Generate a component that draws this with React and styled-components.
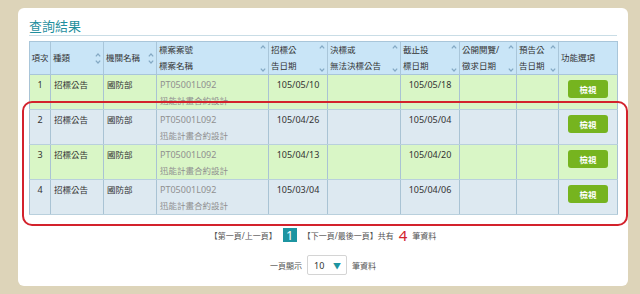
import React from "react";
import styled, { createGlobalStyle } from "styled-components";

const GlobalStyle = createGlobalStyle`
  html, body {
    margin: 0;
    padding: 0;
    background: #ddd4b9;
  }
  body {
    font-family: "Noto Sans", "Noto Sans CJK TC", sans-serif;
    color: #333;
  }
`;

const Page = styled.div`
  width: 640px;
  height: 294px;
  padding: 8px 12px 8px 18px;
  box-sizing: border-box;
`;

const Card = styled.div`
  position: relative;
  background: #fff;
  border-radius: 6px;
  height: 278px;
  box-sizing: border-box;
  padding: 8px 11px 12px;
  display: flex;
  flex-direction: column;
`;

const Title = styled.h2`
  margin: 0;
  font-size: 13px;
  line-height: 19px;
  font-weight: normal;
  color: #1f8f9e;
  border-bottom: 1px solid #c9dde6;
  font-family: "Noto Sans CJK TC", sans-serif;
`;

const Table = styled.table`
  margin-top: 5px;
  width: 588px;
  border-collapse: collapse;
  table-layout: fixed;
  font-size: 8.5px;
`;

const Th = styled.th`
  background: #c9e5f7;
  border: 1px solid #a9c6da;
  height: 33px;
  padding: 0 ${p => (p.$tight ? "0" : "2px")};
  text-align: left;
  font-weight: normal;
  color: #333;
  vertical-align: middle;
  line-height: 16px;
  white-space: nowrap;
  box-sizing: border-box;
`;

const HeadInner = styled.div`
  display: flex;
  justify-content: ${p => (p.$tight ? "center" : "space-between")};
  align-items: stretch;
`;

const Arrows = styled.div`
  display: flex;
  flex-direction: column;
  justify-content: space-between;
  padding: 3px 0 2px;
  color: #84a9c4;
`;

const Tr = styled.tr`
  background: ${p => (p.$alt ? "#dde9f1" : "#d9f6c6")};
`;

const Td = styled.td`
  border-left: 1px solid #a9c3d4;
  border-right: 1px solid #a9c3d4;
  border-bottom: 1px solid #b9d0dd;
  height: 35px;
  padding: 2px 3px 0;
  vertical-align: top;
  line-height: 16px;
  text-align: ${p => p.$align || "left"};
  color: ${p => (p.$muted ? "#909090" : "#333")};
  font-size: ${p => (p.$num ? "9px" : "8.5px")};
  box-sizing: border-box;
`;

const CaseNo = styled.div`
  font-size: 9px;
`;

const ViewButton = styled.button`
  margin-top: 3px;
  width: 40px;
  height: 18px;
  border: none;
  border-radius: 3px;
  background: #76b41f;
  color: #fff;
  font-family: "Noto Sans CJK TC", sans-serif;
  font-size: 8.5px;
  font-weight: bold;
  padding: 0;
`;

const Pager = styled.div`
  margin-top: 12px;
  height: 16px;
  display: flex;
  justify-content: center;
  align-items: center;
  gap: 3px;
  font-size: 8px;
  color: #555;
`;

const PageNum = styled.span`
  display: inline-flex;
  align-items: center;
  justify-content: center;
  width: 14px;
  height: 14px;
  background: #1d95a1;
  color: #fff;
  font-size: 13px;
  margin: 0 3px;
`;

const Count = styled.span`
  color: #d2232c;
  font-size: 15px;
  line-height: 16px;
  margin: 0 2px;
`;

const PerPage = styled.div`
  margin-top: 12px;
  display: flex;
  justify-content: center;
  align-items: center;
  gap: 5px;
  font-size: 8px;
  color: #555;
`;

const SelectBox = styled.div`
  width: 40px;
  height: 20px;
  box-sizing: border-box;
  border: 1px solid #d4d4d4;
  border-radius: 2px;
  display: flex;
  align-items: center;
  justify-content: space-between;
  padding: 0 5px 0 6px;
  font-size: 9px;
  color: #333;
`;

const Caret = styled.span`
  color: #1d95a1;
  font-size: 8px;
`;

const Highlight = styled.div`
  position: absolute;
  left: 4px;
  top: 93px;
  width: 606px;
  height: 125px;
  box-sizing: border-box;
  border: 2.5px solid #d3222c;
  border-radius: 10px;
  pointer-events: none;
`;

const Chevron = ({ up }) => (
  <svg width="6" height="4" viewBox="0 0 6 4">
    <path
      d={up ? "M0.8 3.4 L3 1 L5.2 3.4" : "M0.8 0.6 L3 3 L5.2 0.6"}
      fill="none"
      stroke="currentColor"
      strokeWidth="1.2"
    />
  </svg>
);

const columns = [
  { w: 21, label: ["項次"], sort: false },
  { w: 53, label: ["種類"], sort: true },
  { w: 53, label: ["機關名稱"], sort: true },
  { w: 112, label: ["標案案號", "標案名稱"], sort: true },
  { w: 59, label: ["招標公", "告日期"], sort: true },
  { w: 73, label: ["決標或", "無法決標公告"], sort: true },
  { w: 59, label: ["截止投", "標日期"], sort: true },
  { w: 57, label: ["公開閱覽/", "徵求日期"], sort: true },
  { w: 42, label: ["預告公", "告日期"], sort: true },
  { w: 59, label: ["功能選項"], sort: false },
];

const rows = [
  { no: 1, open: "105/05/10", close: "105/05/18" },
  { no: 2, open: "105/04/26", close: "105/05/04" },
  { no: 3, open: "105/04/13", close: "105/04/20" },
  { no: 4, open: "105/03/04", close: "105/04/06" },
];

export default function App() {
  return (
    <Page>
      <GlobalStyle />
      <Card>
        <Title>查詢結果</Title>
        <Table>
          <colgroup>
            {columns.map((c, i) => (
              <col key={i} style={{ width: c.w }} />
            ))}
          </colgroup>
          <thead>
            <tr>
              {columns.map((c, i) => (
                <Th key={i} $tight={i === 0}>
                  <HeadInner $tight={i === 0}>
                    <div>
                      {c.label.map((l, j) => (
                        <div key={j}>{l}</div>
                      ))}
                    </div>
                    {c.sort && (
                      <Arrows>
                        <Chevron up />
                        <Chevron />
                      </Arrows>
                    )}
                  </HeadInner>
                </Th>
              ))}
            </tr>
          </thead>
          <tbody>
            {rows.map((r, i) => (
              <Tr key={r.no} $alt={i % 2 === 1}>
                <Td $align="center" $num>{r.no}</Td>
                <Td>招標公告</Td>
                <Td>國防部</Td>
                <Td $muted>
                  <CaseNo>PT05001L092</CaseNo>
                  <div>迅能計畫合約設計</div>
                </Td>
                <Td $align="center" $num>{r.open}</Td>
                <Td />
                <Td $align="center" $num>{r.close}</Td>
                <Td />
                <Td />
                <Td $align="center">
                  <ViewButton>檢視</ViewButton>
                </Td>
              </Tr>
            ))}
          </tbody>
        </Table>
        <Pager>
          <span>【第一頁/上一頁】</span>
          <PageNum>1</PageNum>
          <span>【下一頁/最後一頁】共有</span>
          <Count>4</Count>
          <span>筆資料</span>
        </Pager>
        <PerPage>
          <span>一頁顯示</span>
          <SelectBox>
            <span>10</span>
            <Caret>▼</Caret>
          </SelectBox>
          <span>筆資料</span>
        </PerPage>
        <Highlight />
      </Card>
    </Page>
  );
}
